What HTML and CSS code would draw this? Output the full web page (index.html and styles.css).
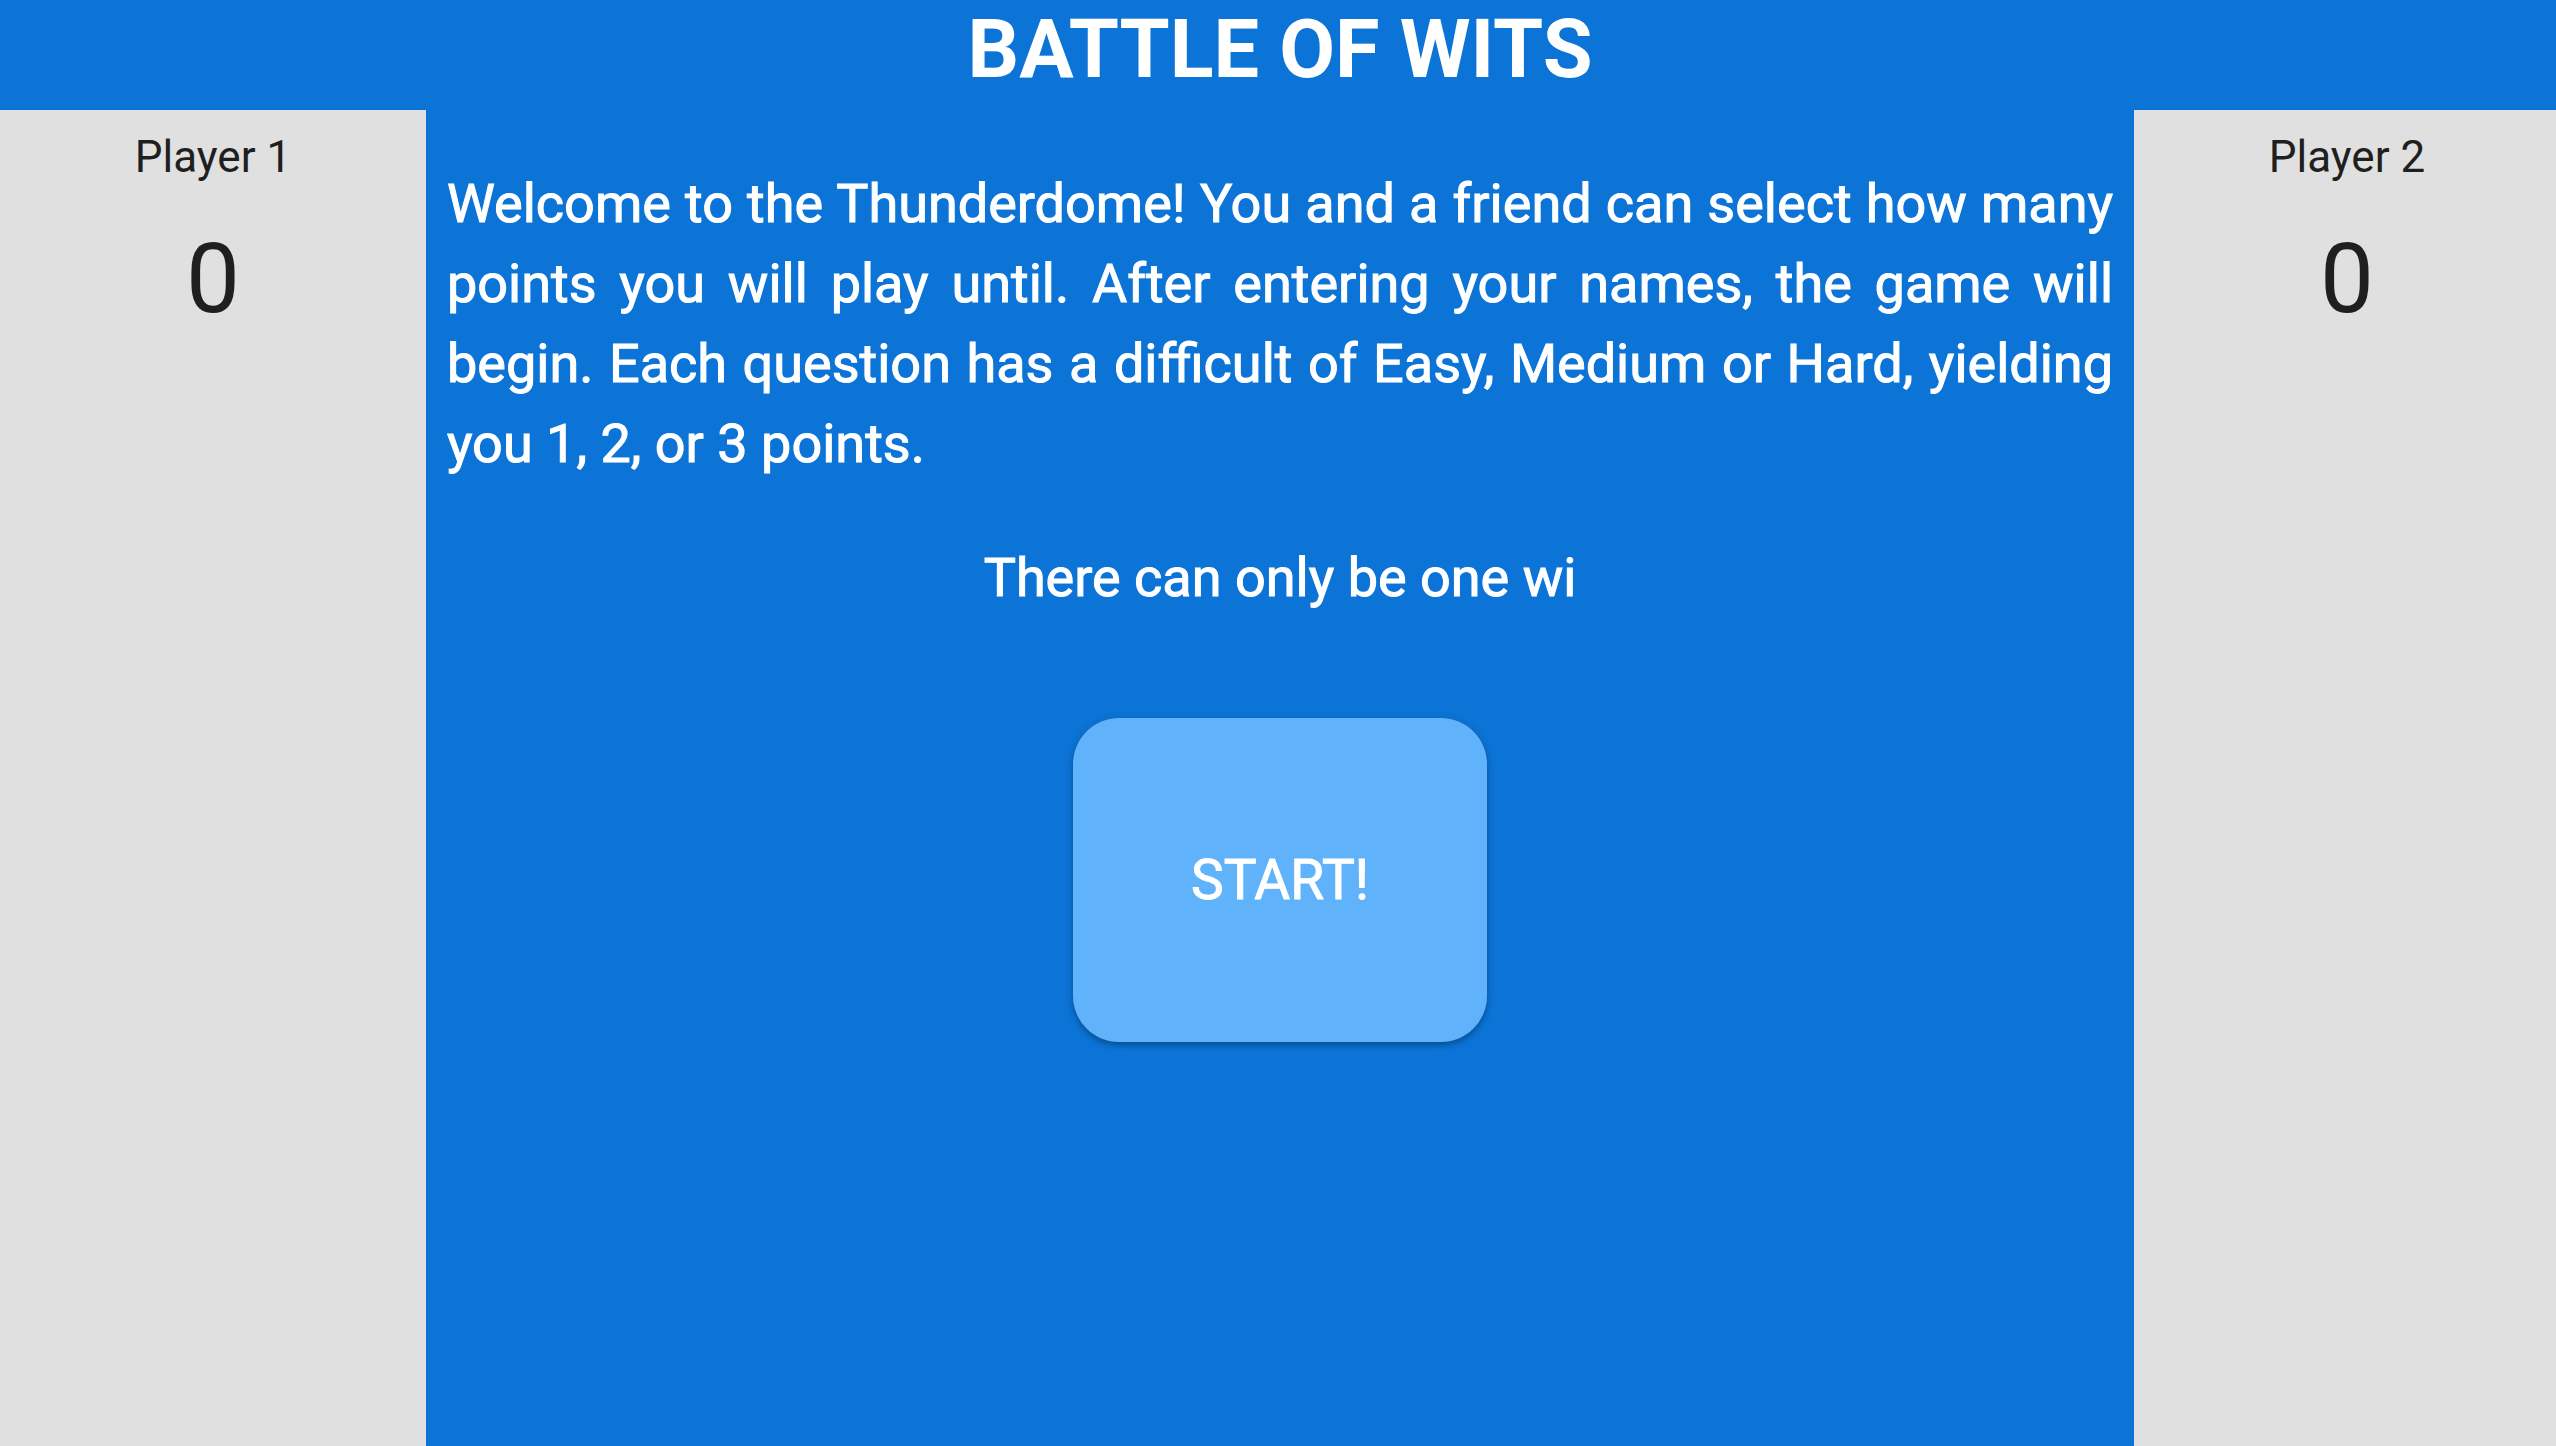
FILE: index.html
```html
<!DOCTYPE html>
<html lang="en">
<head>
<meta charset="utf-8">
<title>Battle of Wits</title>
<link rel="stylesheet" href="styles.css">
</head>
<body>
<div class="page">
<header class="banner"><h1 class="title">BATTLE OF WITS</h1></header>
<div class="board">
<aside class="player">
<h2 class="player-name">Player 1</h2>
<p class="score">0</p>
</aside>
<main class="stage">
<p class="intro">Welcome to the Thunderdome! You and a friend can select how many points you will play until. After entering your names, the game will begin. Each question has a difficult of Easy, Medium or Hard, yielding you 1, 2, or 3 points.</p>
<p class="tagline">There can only be one wi</p>
<button class="start" type="button">START!</button>
</main>
<aside class="player">
<h2 class="player-name">Player 2</h2>
<p class="score">0</p>
</aside>
</div>
</div>
</body>
</html>
```
FILE: styles.css
```css
* {
  box-sizing: border-box;
}

body {
  margin: 0;
  overflow-x: hidden;
  background: #0c74d6;
  color: #fff;
  font-family: Roboto, "Liberation Sans", sans-serif;
}

/* Bleeds slightly past the right edge of the window. */
.page {
  display: flex;
  flex-direction: column;
  min-height: 100vh;
  margin-right: -4px;
}

.banner {
  padding-bottom: 10px;
  text-align: center;
}

.title {
  margin: 0;
  font-size: 81px;
  font-weight: 700;
  line-height: 100px;
}

.board {
  display: grid;
  flex: 1;
  grid-template-columns: 16.64% 1fr 16.64%;
}

.player {
  padding-top: 16px;
  background: #e0e0e0;
  color: #1f1f1f;
  text-align: center;
}

.player-name {
  margin: 0 0 32px;
  font-size: 44px;
  font-weight: 400;
  line-height: 62px;
}

.score {
  margin: 0;
  font-size: 96px;
  line-height: 118px;
}

.stage {
  display: flex;
  flex-direction: column;
  align-items: center;
  padding: 54px 21px;
}

.intro,
.tagline {
  margin: 0 0 54px;
  font-size: 54px;
  font-weight: 400;
  line-height: 80px;
  -webkit-text-stroke: 1px #fff;
}

.intro {
  text-align: justify;
}

.start {
  width: 414px;
  height: 324px;
  margin-top: 46px;
  border: 0;
  border-radius: 46px;
  background: #60b2fb;
  box-shadow: 0 4px 4px rgba(0, 0, 0, 0.14), 0 2px 8px rgba(0, 0, 0, 0.2);
  color: #fff;
  font: 400 55px Roboto, "Liberation Sans", sans-serif;
  -webkit-text-stroke: 1px #fff;
}
```
